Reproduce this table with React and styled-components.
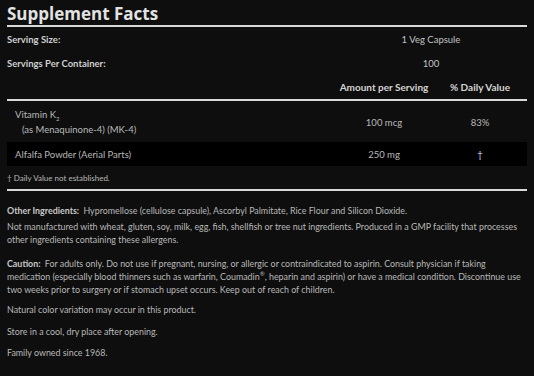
import styled, { createGlobalStyle } from 'styled-components';

const Global = createGlobalStyle`
  html, body {
    margin: 0;
    background: #0e0e0e;
  }
  sub, sup {
    line-height: 0;
    font-size: 6px;
  }
`;

const Page = styled.main`
  padding: 0 7px 20px;
  font-family: Lato, "Open Sans", sans-serif;
  color: #b9b9b9;
`;

const Title = styled.h1`
  margin: 0;
  padding: 2px 0 0;
  font-family: "Open Sans", "DejaVu Sans", sans-serif;
  font-size: 17px;
  line-height: 23px;
  font-weight: 700;
  color: #e2e2e2;
  border-bottom: 2px solid #d9d9d9;
`;

const Grid = styled.div`
  display: grid;
  grid-template-columns: 1fr 98px 94px;
  align-items: center;
`;

const InfoRow = styled(Grid)`
  height: 24px;
  font-size: 9.5px;
`;

const Label = styled.span`
  font-weight: 700;
  color: #cfcfcf;
`;

const Value = styled.span`
  grid-column: 2 / span 2;
  text-align: center;
  color: #c2c2c2;
`;

const HeadCell = styled.span`
  text-align: center;
  font-weight: 700;
  font-size: 10px;
  color: #d4d4d4;
`;

const Table = styled.div`
  border-top: 2px solid #d9d9d9;
  padding-top: 1px;
`;

const NutrientRow = styled(Grid)`
  min-height: ${({ $tall }) => ($tall ? '40px' : '24px')};
  background: ${({ $dark }) => ($dark ? '#000' : 'transparent')};
  font-size: 9.5px;
`;

const Name = styled.div`
  padding-left: 8px;
  line-height: 15px;
`;

const Sub = styled.div`
  padding-left: 7px;
`;

const Cell = styled.span`
  text-align: center;
  color: ${({ $mark }) => ($mark ? '#c8d4e6' : 'inherit')};
`;

const Footnote = styled.p`
  margin: 0;
  padding: 6px 0 5px;
  font-size: 8px;
  line-height: 12px;
  border-bottom: 2px solid #d9d9d9;
`;

const Notes = styled.section`
  padding-top: 13px;
  font-size: 8.9px;
  line-height: 13px;
`;

const Para = styled.p`
  margin: 0 0 ${({ $gap }) => $gap ?? 8}px;
`;

const Strong = styled.b`
  font-weight: 700;
  color: #c9c9c9;
  margin-right: 2px;
`;

export default function App() {
  return (
    <>
      <Global />
      <Page>
        <Title>Supplement Facts</Title>
        <InfoRow>
          <Label>Serving Size:</Label>
          <Value>1 Veg Capsule</Value>
        </InfoRow>
        <InfoRow>
          <Label>Servings Per Container:</Label>
          <Value>100</Value>
        </InfoRow>
        <InfoRow>
          <span />
          <HeadCell>Amount per Serving</HeadCell>
          <HeadCell>% Daily Value</HeadCell>
        </InfoRow>
        <Table>
          <NutrientRow $tall>
            <Name>
              Vitamin K<sub>2</sub>
              <Sub>(as Menaquinone-4) (MK-4)</Sub>
            </Name>
            <Cell>100 mcg</Cell>
            <Cell>83%</Cell>
          </NutrientRow>
          <NutrientRow $dark>
            <Name>Alfalfa Powder (Aerial Parts)</Name>
            <Cell>250 mg</Cell>
            <Cell $mark>†</Cell>
          </NutrientRow>
        </Table>
        <Footnote>† Daily Value not established.</Footnote>
        <Notes>
          <Para $gap={3}>
            <Strong>Other Ingredients:</Strong> Hypromellose (cellulose capsule), Ascorbyl Palmitate, Rice Flour and Silicon Dioxide.
          </Para>
          <Para $gap={11}>
            Not manufactured with wheat, gluten, soy, milk, egg, fish, shellfish or tree nut ingredients. Produced in a GMP facility that processes other ingredients containing these allergens.
          </Para>
          <Para $gap={7}>
            <Strong>Caution:</Strong> For adults only. Do not use if pregnant, nursing, or allergic or contraindicated to aspirin. Consult physician if taking medication (especially blood thinners such as warfarin, Coumadin<sup>®</sup>, heparin and aspirin) or have a medical condition. Discontinue use two weeks prior to surgery or if stomach upset occurs. Keep out of reach of children.
          </Para>
          <Para $gap={9}>Natural color variation may occur in this product.</Para>
          <Para>Store in a cool, dry place after opening.</Para>
          <Para>Family owned since 1968.</Para>
        </Notes>
      </Page>
    </>
  );
}
